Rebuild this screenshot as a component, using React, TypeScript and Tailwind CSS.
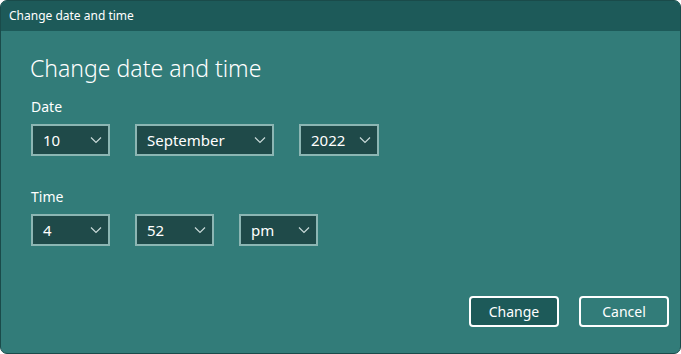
import React from 'react';

function Chevron() {
  return (
    <svg width="12" height="8" viewBox="0 0 12 8" fill="none" className="shrink-0">
      <path d="M1 1.5L6 6.5L11 1.5" stroke="#c9d9d8" strokeWidth="1.2" />
    </svg>
  );
}

function Select({ value, width }: { value: string; width: string }) {
  return (
    <div
      className={`flex h-[32px] items-center justify-between border-2 border-[#8cb6b3] bg-[#1f4a49] pr-[6px] pl-[10px] text-[15px] text-white ${width}`}
    >
      <span>{value}</span>
      <Chevron />
    </div>
  );
}

export default function App() {
  return (
    <div
      className="h-[354px] w-[681px] bg-white"
      style={{ fontFamily: '"Segoe UI", "Noto Sans", "Open Sans", sans-serif' }}
    >
      <div className="flex h-full w-full flex-col overflow-hidden rounded-[7px] border border-[#1a4b4a] bg-[#327c79]">
        <div className="flex h-[30px] shrink-0 items-center bg-[#1d5a59] pl-[8px] text-[12px] text-white">
          Change date and time
        </div>
        <div className="flex flex-1 flex-col pr-[11px] pl-[30px]">
          <h1 className="mt-[21px] -ml-px text-[23px] leading-[32px] font-light text-white">Change date and time</h1>
          <p className="mt-[13px] text-[14px] leading-[20px] text-white">Date</p>
          <div className="mt-[7px] flex gap-[25px]">
            <Select value="10" width="w-[79px]" />
            <Select value="September" width="w-[139px]" />
            <Select value="2022" width="w-[80px]" />
          </div>
          <p className="mt-[31px] text-[14px] leading-[20px] text-white">Time</p>
          <div className="mt-[7px] flex gap-[25px]">
            <Select value="4" width="w-[79px]" />
            <Select value="52" width="w-[79px]" />
            <Select value="pm" width="w-[79px]" />
          </div>
          <div className="mt-[50px] flex justify-end gap-[20px]">
            <button className="h-[31px] w-[90px] rounded-[4px] border-2 border-white bg-[#1d5a59] text-[14px] text-white">
              Change
            </button>
            <button className="h-[31px] w-[90px] rounded-[4px] border-2 border-white text-[14px] text-white">
              Cancel
            </button>
          </div>
        </div>
      </div>
    </div>
  );
}
